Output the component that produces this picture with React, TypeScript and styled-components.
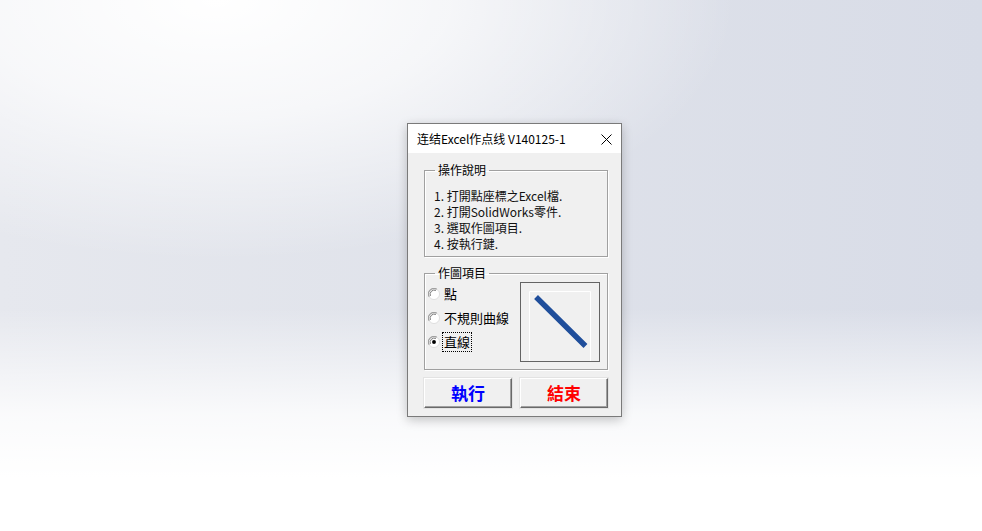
import React from 'react';
import styled, { createGlobalStyle } from 'styled-components';

const GlobalStyle = createGlobalStyle`
  html, body {
    margin: 0;
    padding: 0;
  }
  body {
    font-family: "Noto Sans CJK TC", "Noto Sans", sans-serif;
    color: #000;
  }
`;

const steps = [
  '1. 打開點座標之Excel檔.',
  '2. 打開SolidWorks零件.',
  '3. 選取作圖項目.',
  '4. 按執行鍵.',
];

const options = [
  { label: '點', checked: false },
  { label: '不規則曲線', checked: false },
  { label: '直線', checked: true },
];

const RadioMark = ({ checked }: { checked: boolean }) => (
  <svg width="12" height="12" viewBox="0 0 13 13">
    <circle cx="6.5" cy="6.5" r="6" fill="#fff" stroke="#dcdcdc" />
    <path d="M1.3 9.5 A6 6 0 0 1 9.5 1.3" fill="none" stroke="#a0a0a0" strokeWidth="1.2" />
    <path d="M2.6 8.6 A4.6 4.6 0 0 1 8.6 2.6" fill="none" stroke="#6a6a6a" strokeWidth="1" />
    {checked && <circle cx="6.5" cy="6.5" r="2.1" fill="#000" />}
  </svg>
);

const App = () => {
  return (
    <>
      <GlobalStyle />
      <Desktop>
        <Dialog>
          <TitleBar>
            <Title>连结Excel作点线 V140125-1</Title>
            <CloseIcon width="11" height="11" viewBox="0 0 11 11">
              <path d="M0.5 0.5 L10.5 10.5 M10.5 0.5 L0.5 10.5" stroke="#000" strokeWidth="1" />
            </CloseIcon>
          </TitleBar>

          <Body>
            {/* 操作說明 */}
            <GroupBox>
              <Legend>操作說明</Legend>
              <StepList>
                {steps.map((s) => (
                  <Step key={s}>{s}</Step>
                ))}
              </StepList>
            </GroupBox>

            {/* 作圖項目 */}
            <GroupBox $top={8}>
              <Legend>作圖項目</Legend>
              <OptionArea>
                <RadioColumn>
                  {options.map((o) => (
                    <RadioRow key={o.label}>
                      <RadioMark checked={o.checked} />
                      <RadioLabel $focused={o.checked}>{o.label}</RadioLabel>
                    </RadioRow>
                  ))}
                </RadioColumn>
                <Preview>
                  <svg width="78" height="78" viewBox="0 0 78 78">
                    <path d="M8.5 78 V8.5 H69.5 V78" fill="none" stroke="#fff" strokeWidth="1" />
                    <path d="M17 16 L62.5 61" stroke="#1f4e9b" strokeWidth="5.5" strokeLinecap="square" />
                  </svg>
                </Preview>
              </OptionArea>
            </GroupBox>

            <ButtonRow>
              <ActionButton $color="#0000ff">執行</ActionButton>
              <ActionButton $color="#ff0000">結束</ActionButton>
            </ButtonRow>
          </Body>
        </Dialog>
      </Desktop>
    </>
  );
};

const Desktop = styled.div`
  width: 982px;
  height: 531px;
  box-sizing: border-box;
  padding: 123px 0 0 407px;
  overflow: hidden;
  background:
    radial-gradient(ellipse 520px 260px at 22% 0%, #ffffff 0%, rgba(255, 255, 255, 0.7) 45%, rgba(255, 255, 255, 0) 100%),
    linear-gradient(to bottom, rgba(255, 255, 255, 0) 58%, rgba(255, 255, 255, 0.8) 78%, #fff 90%),
    linear-gradient(to right, #e6e8ee 0%, #dfe2ea 50%, #d8dce7 100%);
`;

const Dialog = styled.div`
  width: 215px;
  box-sizing: border-box;
  border: 1px solid #7a7a7a;
  background: #f0f0f0;
  box-shadow: 0 3px 10px rgba(0, 0, 0, 0.22);
`;

const TitleBar = styled.div`
  height: 29px;
  background: #fff;
  display: flex;
  align-items: center;
  justify-content: space-between;
  padding: 0 9px 0 9px;
`;

const Title = styled.span`
  font-family: "Noto Sans CJK SC", "Noto Sans", sans-serif;
  font-size: 12px;
  line-height: 16px;
  color: #000;
  white-space: nowrap;
`;

const CloseIcon = styled.svg`
  display: block;
  margin-top: 1px;
`;

const Body = styled.div`
  padding: 9px 13px 8px 16px;
  display: flex;
  flex-direction: column;
`;

const GroupBox = styled.fieldset<{ $top?: number }>`
  margin: ${(p) => p.$top ?? 0}px 0 0 0;
  padding: 0;
  min-width: 0;
  border: 1px solid #a0a0a0;
  box-shadow: inset 1px 1px 0 #fff, 1px 1px 0 #fff;
`;

const Legend = styled.legend`
  margin-left: 10px;
  padding: 0 3px;
  font-size: 12px;
  line-height: 16px;
  color: #000;
`;

const StepList = styled.div`
  padding: 10px 0 4px 9px;
  display: flex;
  flex-direction: column;
`;

const Step = styled.div`
  font-size: 12px;
  line-height: 16px;
  color: #111;
  white-space: nowrap;
`;

const OptionArea = styled.div`
  display: flex;
  justify-content: space-between;
  align-items: flex-start;
  padding: 1px 7px 7px 3px;
`;

const RadioColumn = styled.div`
  display: flex;
  flex-direction: column;
`;

const RadioRow = styled.div`
  height: 24px;
  display: flex;
  align-items: center;
  gap: 2px;

  svg {
    display: block;
    flex: none;
  }
`;

const RadioLabel = styled.span<{ $focused: boolean }>`
  font-size: 13px;
  line-height: 18px;
  padding: 0 1px;
  border: 1px dotted ${(p) => (p.$focused ? '#000' : 'transparent')};
  white-space: nowrap;
`;

const Preview = styled.div`
  width: 80px;
  height: 80px;
  box-sizing: border-box;
  border: 1px solid #646464;
  background: #f0f0f0;

  svg {
    display: block;
  }
`;

const ButtonRow = styled.div`
  margin-top: 8px;
  display: grid;
  grid-template-columns: 1fr 1fr;
  gap: 8px;
`;

const ActionButton = styled.button<{ $color: string }>`
  height: 30px;
  padding: 0;
  box-sizing: border-box;
  background: #f0f0f0;
  border-top: 1px solid #fff;
  border-left: 1px solid #fff;
  border-right: 1px solid #696969;
  border-bottom: 1px solid #696969;
  box-shadow: inset -1px -1px 0 #a0a0a0, 0 0 0 1px #e3e3e3;
  font-family: "Noto Sans CJK TC", sans-serif;
  font-size: 17px;
  font-weight: 700;
  line-height: 20px;
  color: ${(p) => p.$color};
`;

export default App;
